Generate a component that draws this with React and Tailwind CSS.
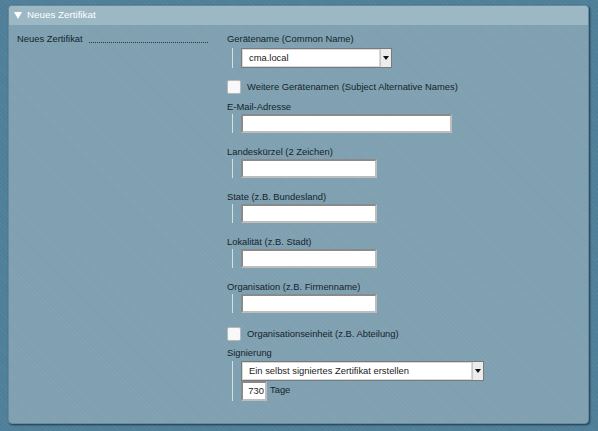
import React from 'react';

const FONT = "font-['Liberation_Sans',Arial,sans-serif]";

const TextInput = ({ width, value = '' }) => (
  <div className={`h-[19px] ${width} bg-white border-2 border-[#8a8a8a] border-r-[#bdbdbd] border-b-[#bdbdbd] text-[9.4px] text-[#222] px-1 flex items-center`}>
    {value}
  </div>
);

const SelectBox = ({ width, value }) => (
  <div className={`h-[20px] ${width} flex bg-white border border-[#7a7a7a]`}>
    <div className="flex-1 flex items-center px-[6px] text-[9.4px] text-[#222] border border-[#d8d8d8]">{value}</div>
    <div className="w-[11px] bg-[#ececec] border-l border-[#c8c8c8] flex items-center justify-center">
      <svg width="6" height="4" viewBox="0 0 6 4"><path d="M0 0h6L3 4z" fill="#111" /></svg>
    </div>
  </div>
);

const Row = ({ children, tall }) => (
  <div className="flex items-stretch">
    <div className="ml-[5px] w-[1px] bg-[#d3dfe5] mr-[8px]" />
    <div className={tall ? 'flex flex-col' : 'flex items-center'}>{children}</div>
  </div>
);

const Field = ({ label, width }) => (
  <div className="mb-[12px]">
    <div className="h-[14px] leading-[14px]">{label}</div>
    <Row><TextInput width={width} /></Row>
  </div>
);

const Check = ({ label }) => (
  <div className="flex items-center h-[14px] my-[2px]">
    <div className="w-[14px] h-[14px] bg-[#f8f8f8] border border-[#b8b8b8] rounded-[2px]" />
    <span className="ml-[6px]">{label}</span>
  </div>
);

export default function App() {
  return (
    <div className={`w-[598px] h-[431px] bg-[#4e7e98] bg-[repeating-linear-gradient(45deg,rgba(255,255,255,0.04)_0px,rgba(255,255,255,0.04)_1px,transparent_1px,transparent_3px)] pt-[5px] pl-[8px] ${FONT}`}>
      <div className="w-[581px] h-[419px] rounded-[4px] bg-[#7fa0b0] bg-[repeating-linear-gradient(45deg,rgba(255,255,255,0.035)_0px,rgba(255,255,255,0.035)_1px,transparent_1px,transparent_3px)] border border-[#6a8a9a] shadow-[1px_1px_2px_rgba(20,50,70,0.9)] overflow-hidden flex flex-col">
        <div className="h-[19px] bg-[#9cb8c4] flex items-center pl-[5px] text-white text-[9.8px]">
          <svg width="8" height="7" viewBox="0 0 8 7" className="mr-[5px]"><path d="M0 0h8L4 7z" fill="#fff" /></svg>
          <span>Neues Zertifikat</span>
        </div>
        <div className="flex text-[9.4px] text-[#14232d] pt-[7px]">
          <div className="w-[218px] pl-[8px] flex items-end h-[14px]">
            <span className="leading-[14px]">Neues Zertifikat</span>
            <div className="ml-[6px] w-[119px] mb-[3px] border-b border-dotted border-[#2a3a44]" />
          </div>
          <div className="flex flex-col">
            <div className="mb-[10px]">
              <div className="h-[14px] leading-[14px] mb-[2px]">Gerätename (Common Name)</div>
              <Row><SelectBox width="w-[151px]" value="cma.local" /></Row>
            </div>
            <Check label="Weitere Gerätenamen (Subject Alternative Names)" />
            <div className="h-[4px]" />
            <Field label="E-Mail-Adresse" width="w-[211px]" />
            <Field label="Landeskürzel (2 Zeichen)" width="w-[136px]" />
            <Field label="State (z.B. Bundesland)" width="w-[136px]" />
            <Field label="Lokalität (z.B. Stadt)" width="w-[136px]" />
            <Field label="Organisation (z.B. Firmenname)" width="w-[136px]" />
            <Check label="Organisationseinheit (z.B. Abteilung)" />
            <div className="h-[3px]" />
            <div>
              <div className="h-[14px] leading-[14px] mb-[1px]">Signierung</div>
              <Row tall>
                <SelectBox width="w-[243px]" value="Ein selbst signiertes Zertifikat erstellen" />
                <div className="flex items-start">
                  <div className="h-[20px] w-[26px] bg-white border-2 border-[#8a8a8a] border-r-[#bdbdbd] border-b-[#bdbdbd] text-[9.4px] text-[#222] flex items-center justify-end pr-[1px]">730</div>
                  <span className="ml-[3px] mt-[2px]">Tage</span>
                </div>
              </Row>
            </div>
          </div>
        </div>
      </div>
    </div>
  );
}
